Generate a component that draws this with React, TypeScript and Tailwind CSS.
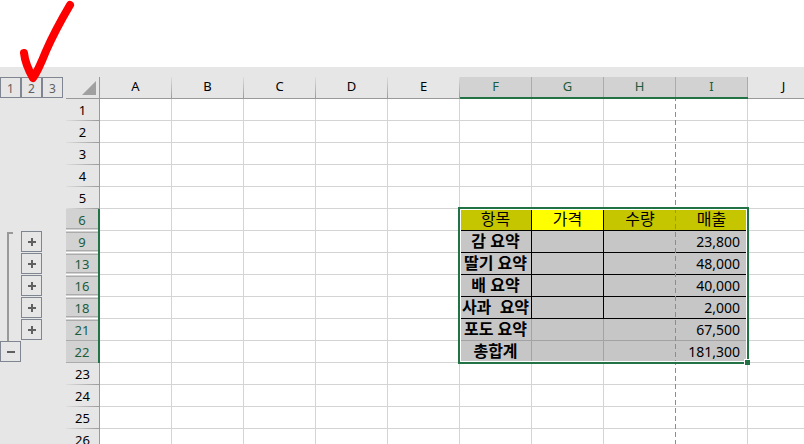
import React from 'react';

import clsx from 'clsx';

const COLUMNS = ['A', 'B', 'C', 'D', 'E', 'F', 'G', 'H', 'I', 'J'];
const ROWS = [1, 2, 3, 4, 5, 6, 9, 13, 16, 18, 21, 22, 23, 24, 25, 26];

const SELECTED_COLUMNS = ['F', 'G', 'H', 'I'];
const SELECTED_ROWS = [6, 9, 13, 16, 18, 21, 22];
const BORDERED_ROWS = [6, 9, 13, 16, 18];

// rows with hidden rows right below / right above them
const HIDDEN_BELOW = [6, 9, 13, 16, 18];
const HIDDEN_ABOVE = [9, 13, 16, 18, 21];

const VALUES: Record<number, Record<string, string>> = {
  6: { F: '항목', G: '가격', H: '수량', I: '매출' },
  9: { F: '감 요약', I: '23,800' },
  13: { F: '딸기 요약', I: '48,000' },
  16: { F: '배 요약', I: '40,000' },
  18: { F: '사과  요약', I: '2,000' },
  21: { F: '포도 요약', I: '67,500' },
  22: { F: '총합계', I: '181,300' },
};

const CheckMark: React.FC = () => (
  <svg className="absolute top-0 left-0 z-10" width="80" height="90" fill="none" aria-hidden="true">
    <path
      d="M70 5C60 22 53 35 46 51C42 61 38 71 33 78C29 71 25 62 24 53"
      stroke="#ff0000"
      strokeWidth="8"
      strokeLinecap="round"
      strokeLinejoin="round"
    />
  </svg>
);

const ToggleButton: React.FC<{ expanded?: boolean; label: string }> = ({ expanded, label }) => (
  <button
    type="button"
    aria-label={label}
    className="flex items-center justify-center border size-[21px] border-[#7f8591] bg-[#e6e6e6]"
  >
    <svg width="9" height="9" fill="#606060" aria-hidden="true">
      <path d="M1 4h8v2H1z" />
      {!expanded && <path d="M4 1h2v8H4z" />}
    </svg>
  </button>
);

const Outline: React.FC = () => (
  <aside className="w-[66px] shrink-0">
    <div className="flex h-[22px]">
      {[1, 2, 3].map((level) => (
        <button
          key={level}
          type="button"
          className="pt-px border size-[21px] border-[#7f8591] text-xs leading-5 text-[#606060]"
        >
          {level}
        </button>
      ))}
    </div>
    <div className="flex pt-[132px]">
      <div className="w-[21px]">
        <div className="h-[110px] pt-px pl-[7px]">
          <div className="w-1.5 h-full border-t-2 border-l-2 border-[#999999]" />
        </div>
        <ToggleButton expanded label="Collapse rows 7 to 21" />
      </div>
      <div className="flex flex-col gap-px">
        {HIDDEN_ABOVE.map((row) => (
          <ToggleButton key={row} label={`Expand row ${row}`} />
        ))}
      </div>
    </div>
  </aside>
);

const ColumnHeader: React.FC<{ name: string }> = ({ name }) => {
  const selected = SELECTED_COLUMNS.includes(name);

  return (
    <th
      scope="col"
      className={clsx('p-0 font-normal', {
        'border-b-2 border-[#217346] bg-[#d2d2d2] text-[#1c5c3c]': selected,
        'border-b border-[#999999] text-black': !selected,
      })}
    >
      <div
        className={clsx('border-r leading-[18px]', {
          'h-5 border-[#ababab]': selected,
          'h-[21px] [border-image:linear-gradient(#e0e0e0,#999999)_1]': !selected,
        })}
      >
        {name}
      </div>
    </th>
  );
};

const RowHeader: React.FC<{ row: number }> = ({ row }) => {
  const selected = SELECTED_ROWS.includes(row);

  return (
    <th
      scope="row"
      className={clsx('p-0 text-[13px] font-normal', {
        'border-r-2 border-[#217346] bg-[#d2d2d2] text-[#1c5c3c]': selected,
        'border-r border-[#999999] bg-[#e6e6e6] text-black': !selected,
      })}
    >
      <div
        className={clsx('h-[22px]', {
          'border-b border-[#ababab]': selected && !HIDDEN_BELOW.includes(row),
          'border-b border-white shadow-[inset_0_-1px_#d2d2d2,inset_0_-2px_#ababab]':
            HIDDEN_BELOW.includes(row),
          'border-b [border-image:linear-gradient(to_right,#e0e0e0,#999999)_1]': !selected,
        })}
      >
        <div
          className={clsx('pt-px leading-5', {
            'shadow-[inset_0_1px_#d2d2d2,inset_0_2px_#ababab]': HIDDEN_ABOVE.includes(row),
          })}
        >
          {row}
        </div>
      </div>
    </th>
  );
};

const Cell: React.FC<{ row: number; column: string }> = ({ row, column }) => {
  const selected = SELECTED_ROWS.includes(row) && SELECTED_COLUMNS.includes(column);
  const bordered = selected && BORDERED_ROWS.includes(row);
  const heading = row === 6;
  const amount = column === 'I' && !heading;

  return (
    <td
      className={clsx('p-0 border-b whitespace-pre leading-[18px]', {
        'border-r': column !== 'H',
        'border-[#d4d4d4]': !selected,
        'border-[#a3a3a3]': selected && !bordered,
        'border-black': bordered,
        'bg-[#c6c6c6]': selected && !heading,
        'bg-[#c6c600]': selected && heading && column !== 'G',
        'bg-[#ffff00]': selected && heading && column === 'G',
        'text-right pr-[7px] text-sm leading-[18px]': amount,
        'text-center text-base leading-[18px] pb-0.5': !amount,
        'font-bold': column === 'F' && !heading,
      })}
    >
      {VALUES[row]?.[column]}
    </td>
  );
};

const Sheet: React.FC = () => (
  <div className="relative shrink-0">
    <table className="w-[754px] table-fixed border-separate border-spacing-0">
      <colgroup>
        <col className="w-[34px]" />
        {COLUMNS.map((name) => (
          <col key={name} className="w-[72px]" />
        ))}
      </colgroup>
      <thead className="text-[13px]">
        <tr className="h-[22px]">
          <td className="p-0 border-r border-b border-[#999999]">
            <svg className="ml-auto mr-[3px]" width="14" height="14" aria-hidden="true">
              <path d="M14 0v14H0z" fill="#a0a0a0" />
            </svg>
          </td>
          {COLUMNS.map((name) => (
            <ColumnHeader key={name} name={name} />
          ))}
        </tr>
      </thead>
      <tbody>
        {ROWS.map((row) => (
          <tr key={row} className="h-[22px] bg-white">
            <RowHeader row={row} />
            {COLUMNS.map((column) => (
              <Cell key={column} row={row} column={column} />
            ))}
          </tr>
        ))}
      </tbody>
    </table>

    {/* page break */}
    <div className="absolute bottom-0 top-[22px] left-[609px] w-px bg-[repeating-linear-gradient(#8c8c8c_0_2px,transparent_2px_5px,#8c8c8c_5px_8px)]" />

    {/* selected range with its fill handle */}
    <div className="absolute border-2 pointer-events-none top-[130px] left-[392px] w-[291px] h-[157px] border-[#217346] shadow-[inset_0_0_0_1px_white]">
      <div className="absolute border-t border-l border-white size-1.5 -right-[3px] -bottom-[3px] bg-[#217346]" />
    </div>
  </div>
);

const App: React.FC = () => (
  <main className="relative flex flex-col h-screen overflow-hidden bg-white font-['Noto_Sans','Noto_Sans_CJK_KR',sans-serif]">
    <CheckMark />
    <div className="flex grow pt-2.5 mt-[67px] bg-[#e6e6e6]">
      <Outline />
      <Sheet />
    </div>
  </main>
);

export default App;
